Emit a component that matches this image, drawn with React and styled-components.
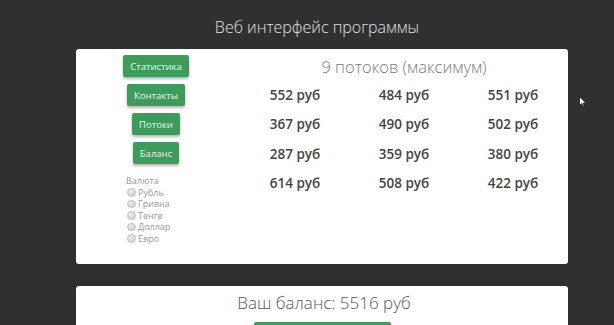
import React from "react";
import styled, { createGlobalStyle } from "styled-components";

const Global = createGlobalStyle`
  html, body { margin: 0; padding: 0; }
  body {
    background: #303030;
    font-family: "Open Sans", "DejaVu Sans", sans-serif;
    overflow: hidden;
  }
`;

const Page = styled.div`
  position: relative;
  width: 614px;
  height: 325px;
  overflow: hidden;
`;

const Container = styled.div`
  width: 492px;
  margin-left: 76px;
`;

const Title = styled.h1`
  margin: 0 0 10px;
  padding: 15px 10px 0 0;
  font-size: 16px;
  line-height: 24px;
  font-weight: 300;
  color: #e0e0e0;
  text-align: center;
`;

const Card = styled.div`
  background: #fff;
  border-radius: 3px;
  height: ${(p) => p.$h || "auto"};
  margin-bottom: 22px;
`;

const Grid = styled.div`
  display: grid;
  grid-template-columns: 164px 1fr;
  height: 100%;
`;

const Side = styled.div`
  display: flex;
  flex-direction: column;
  align-items: center;
  padding: 6px 4px 0 0;
  gap: 7px;
`;

const GreenButton = styled.button`
  height: ${(p) => p.$h || 22}px;
  width: ${(p) => (p.$w ? p.$w + "px" : "auto")};
  padding: 0 7px;
  border: none;
  border-radius: 2px;
  background: #3d9c5c;
  color: #e8f5ec;
  font-family: "Open Sans", sans-serif;
  font-size: 9.5px;
  box-shadow: 0 2px 3px rgba(0, 0, 0, 0.3);
  cursor: pointer;
`;

const Currency = styled.div`
  align-self: flex-start;
  margin: 4px 0 0 50px;
  font-size: 9px;
  line-height: 11.5px;
  color: #9a9a9a;
`;

const RadioRow = styled.label`
  display: flex;
  align-items: center;
  gap: 2.5px;
  margin-left: 1px;
`;

const Radio = styled.span`
  width: 6.5px;
  height: 6.5px;
  border-radius: 50%;
  background: radial-gradient(circle at 40% 35%, #eee, #c6c6c6);
  border: 0.5px solid #c4c4c4;
`;

const Main = styled.div`
  display: flex;
  flex-direction: column;
  align-items: center;
  padding-top: 6px;
`;

const Heading = styled.div`
  font-size: 16.5px;
  font-weight: 300;
  line-height: 24px;
  color: #7a7a7a;
`;

const Prices = styled.div`
  display: grid;
  grid-template-columns: repeat(3, 109px);
  grid-auto-rows: 29.3px;
  margin-top: 1.5px;
  align-items: center;
`;

const Price = styled.div`
  text-align: center;
  font-size: 13.5px;
  font-weight: 600;
  color: #444;
`;

const Balance = styled.div`
  display: flex;
  flex-direction: column;
  align-items: center;
  padding-top: 6px;
  height: 60px;
`;

const BalanceText = styled.div`
  font-size: 17px;
  font-weight: 300;
  line-height: 22px;
  color: #555;
  padding-left: 4px;
`;

const BigButton = styled(GreenButton)`
  margin-top: 8px;
`;

const Cursor = styled.svg`
  position: absolute;
  left: 579px;
  top: 96px;
`;

const prices = [
  552, 484, 551,
  367, 490, 502,
  287, 359, 380,
  614, 508, 422,
];

const currencies = ["Рубль", "Гривна", "Тенге", "Доллар", "Евро"];

export default function App() {
  return (
    <Page>
      <Global />
      <Container>
        <Title>Веб интерфейс программы</Title>
        <Card $h="215px">
          <Grid>
            <Side>
              <GreenButton>Статистика</GreenButton>
              <GreenButton>Контакты</GreenButton>
              <GreenButton>Потоки</GreenButton>
              <GreenButton>Баланс</GreenButton>
              <Currency>
                <div>Валюта</div>
                {currencies.map((c) => (
                  <RadioRow key={c}>
                    <Radio />
                    {c}
                  </RadioRow>
                ))}
              </Currency>
            </Side>
            <Main>
              <Heading>9 потоков (максимум)</Heading>
              <Prices>
                {prices.map((p, i) => (
                  <Price key={i}>{p} руб</Price>
                ))}
              </Prices>
            </Main>
          </Grid>
        </Card>
        <Card>
          <Balance>
            <BalanceText>Ваш баланс: 5516 руб</BalanceText>
            <BigButton $w={137} $h={30} />
          </Balance>
        </Card>
      </Container>
      <Cursor width="8" height="12" viewBox="0 0 8 12">
        <path d="M0.5 0.5 L0.5 9.5 L2.6 7.6 L4 10.8 L5.3 10.2 L4 7.2 L6.8 7.1 Z" fill="#fff" stroke="#111" strokeWidth="0.8" />
      </Cursor>
    </Page>
  );
}
